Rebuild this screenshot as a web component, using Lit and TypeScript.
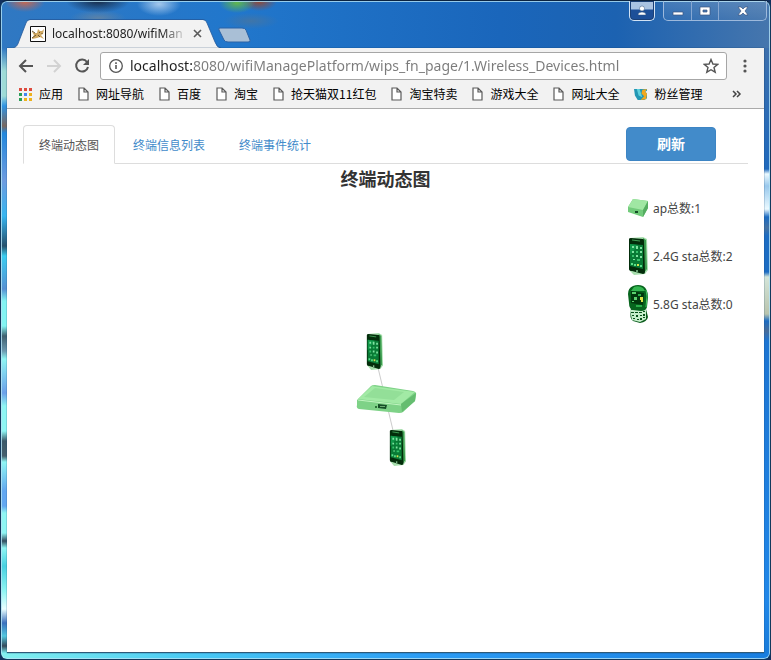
import { LitElement, html, svg, css } from "lit";
import { customElement, state } from "lit/decorators.js";
import { classMap } from "lit/directives/class-map.js";

const phoneArt = svg`
  <path d="M2 1 L15 0 L19 2 L20 33 L17 37 L6 38 L2 34 Z" fill="#a8dfae"/>
  <path d="M15 1 L18 3 L19 32 L16 36 Z" fill="#3d9e51"/>
  <path d="M1 2 Q1 1 3 1 L15 2 Q16 2 16 4 L17 35 Q17 37 15 37 L4 34 Q1 34 1 32 Z" fill="#032d0b"/>
  <path d="M2 7 L15 8 L15 32 L2 29 Z" fill="#087a35"/>
  <path d="M2 7 L10 8 L2 18 Z" fill="#11984a"/>
  <path d="M4 3 L12 4" stroke="#3f9f55" stroke-width="1"/>
  <path d="M4 9h2v2h-2z M8 9h2v3h-2z M12 10h2v2h-2z M4 14h2v2h-2z M12 14h2v2h-2z M8 18h2v2h-2z M12 19h2v2h-2z M5 22h2v1h-2z" fill="#7fe3a0"/>
  <path d="M8 14h2v2h-2z M4 18h2v2h-2z M9 22h3v2h-3z" fill="#34c26a"/>
  <path d="M3 26h2v2h-2z M6 27h2v2h-2z M12 28h2v2h-2z" fill="#5be08a"/>
  <path d="M9 27h2v2h-2z" fill="#d3e54c"/>
  <circle cx="9" cy="34" r="1" fill="#8fc99a"/>`;

const sliderArt = svg`
  <path d="M3 23 L17 20 L20 32 Q19 37 12 38 L5 36 Q1 34 3 23 Z" fill="#0b5c1d"/>
  <path d="M2 25 L4 35 L12 37 L18 34 L18 24 Z" fill="#c6efcb"/>
  <path d="M3 27h3v1h-3z M7 27h3v1h-3z M11 27h3v1h-3z M15 26h2v1h-2z M4 30h2v1h-2z M8 30h2v2h-2z M12 30h2v1h-2z M15 29h2v2h-2z M5 33h2v1h-2z M9 34h2v1h-2z M12 33h2v2h-2z M15 32h2v1h-2z" fill="#08501a"/>
  <path d="M5 1 Q10 -1 15 1 Q20 4 20 12 L19 22 Q18 26 13 26 L5 25 Q1 24 1 18 L0 9 Q0 3 5 1 Z" fill="#07651e"/>
  <path d="M6 2 Q11 0 15 3 L17 6 L3 6 Z" fill="#35b651"/>
  <path d="M3 6 L16 8 L15 20 L3 18 Z" fill="#02380d"/>
  <path d="M4 7h4v2h-4z M6 12h3v3h-3z M4 16h2v1h-2z" fill="#5ad06c"/>
  <path d="M12 12h3v5h-2v-2h-1z" fill="#d9e447"/>
  <path d="M10 9h3v2h-3z M8 20h6v2h-6z" fill="#2bb04b"/>
  <path d="M18 5 L19 11 L18 22" stroke="#48c964" fill="none"/>`;

const apArt = svg`
  <path d="M1 15 L15 1 Q16 0 19 0 L57 6 Q61 7 60 10 L59 16 L47 27 Q46 28 43 28 L3 24 Q0 23 1 20 Z" fill="#7ed287"/>
  <path d="M2 14 L16 1 L59 7 L45 19 Z" fill="#a2eaa5"/>
  <path d="M8 12 L19 3 L48 7 L38 15 Z" fill="#93df98"/>
  <path d="M45 19 L60 8 L59 16 L46 27 Z" fill="#65bd70"/>
  <path d="M2 15 L45 20" stroke="#c2f6c1" stroke-width="1"/>
  <path d="M22 19 L31 20 L30 24 L22 23 Z" fill="#164e27"/>
  <path d="M24 21h5v1h-5z" fill="#6bad72"/>
  <path d="M19 21h2v2h-2z" fill="#2d7338"/>`;

const pageIcon = html`<svg class="page" viewBox="0 0 11 14" aria-hidden="true">
  <path d="M1 1 H6 L10 5 V13 H1 Z M6 1 V5 H10" fill="#fff" stroke="#5a5a5a" stroke-width="1.2"/></svg>`;

const appsIcon = html`<svg class="apps" viewBox="0 0 13 13" aria-hidden="true">
  <path d="M0 0h3v3H0z M5 0h3v3H5z M10 0h3v3h-3z" fill="#dd4b3e"/>
  <path d="M0 5h3v3H0z" fill="#2a9d58"/><path d="M5 5h3v3H5z" fill="#4285f4"/>
  <path d="M10 5h3v3h-3z M5 10h3v3H5z M10 10h3v3h-3z" fill="#edb21d"/>
  <path d="M0 10h3v3H0z" fill="#2a9d58"/></svg>`;

const fansIcon = html`<svg class="fans" viewBox="0 0 14 12" aria-hidden="true">
  <path d="M0 0 L14 0 L14 2 L12 3 L14 5 L14 10 L11 12 L4 12 L1 7 Z" fill="#2397b4"/>
  <path d="M3 0 L6 0 L9 9 L5 7 Z" fill="#5fd0dc"/>
  <path d="M9 1 L14 0 L12 3 L14 5 L13 11 L7 12 L11 8 L8 5 Z" fill="#f3a81c"/></svg>`;

const bookmarks = ["网址导航", "百度", "淘宝", "抢天猫双11红包", "淘宝特卖", "游戏大全", "网址大全"];
const tabs = ["终端动态图", "终端信息列表", "终端事件统计"];

@customElement("window-bar")
class WindowBar extends LitElement {
  static styles = css`
    :host { display: flex; align-items: flex-end; height: 48px; font-family: "Noto Sans", "Noto Sans CJK SC", sans-serif; }
    button { margin: 0; padding: 0; border: 0; background: none; display: flex; align-items: center; justify-content: center; }
    .tab { display: grid; width: 208px; height: 29px; margin-left: 6px; }
    .tab > * { grid-area: 1 / 1; }
    .shape { width: 208px; height: 29px; }
    .face { display: flex; align-items: center; padding: 0 19px 0 17px; }
    .fav { width: 16px; height: 16px; flex: none; }
    .title { flex: 1; margin-left: 6px; overflow: hidden; white-space: nowrap; font-size: 12px; line-height: 16px; color: #222;
      -webkit-mask-image: linear-gradient(to right, #000 110px, transparent 136px); mask-image: linear-gradient(to right, #000 110px, transparent 136px); }
    .x { width: 9px; height: 9px; margin-left: 8px; }
    .x svg { width: 9px; height: 9px; }
    .new { width: 34px; height: 16px; margin: 0 0 5px -3px; }
    .new svg { width: 34px; height: 16px; }
    .controls { align-self: flex-start; display: flex; gap: 8px; margin: 1px -3px 0 auto; }
    .group { display: flex; box-sizing: border-box; height: 20px; border: 1px solid #9db9dc; border-top: 0; border-radius: 0 0 5px 5px; background: linear-gradient(#ffffff22, #ffffff08); }
    .group button { width: 27px; }
    .group button + button { border-left: 1px solid #86a7d2; }
    .group .close { width: 48px; }
    .user { border-color: #d2e3f5; background: linear-gradient(#a9c3e2 0 8px, #1d4f98 9px 18px); box-shadow: inset 0 0 0 1px #1b4076; }
    .user button { width: 24px; }
    .controls svg { width: 14px; height: 12px; }
  `;
  render() {
    return html`
      <div class="tab">
        <svg class="shape" viewBox="0 0 208 29" aria-hidden="true">
          <path d="M0 29 C4 28 5 25 6 22 L13 4 Q14 1 17 1 H190 Q193 1 194 4 L202 23 Q204 29 208 29 Z" fill="#f2f2f2"/>
          <path d="M0 29 C4 28 5 25 6 22 L13 4 Q14 0.500 17 0.500 H190 Q193 0.500 194 4 L202 23 Q204 29 208 29" fill="none" stroke="#24599b" stroke-width="0.800"/>
        </svg>
        <div class="face">
          <svg class="fav" viewBox="0 0 16 16" aria-hidden="true">
            <path d="M0.500 0.500h15v15h-15z" fill="#fff" stroke="#111"/>
            <path d="M7 7 L8 3 L10 5 L12 5 L14 3 L13 8 L11 9 L14 13 L10 11 L7 12 L2 13 L4 9 L2 6 L5 7 Z" fill="#d0a963"/>
            <path d="M2 12 L6 9 M9 6 L10 7 M12 7 L12 8 M8 9 L10 11 M2 5 L5 7" stroke="#6b5530" fill="none"/></svg>
          <span class="title">localhost:8080/wifiMan</span>
          <button class="x" aria-label="Close tab"><svg viewBox="0 0 9 9"><path d="M1 1 L8 8 M8 1 L1 8" stroke="#5a5a5a" stroke-width="1.600"/></svg></button>
        </div>
      </div>
      <button class="new" aria-label="New tab"><svg viewBox="0 0 34 16">
        <path d="M2 1 H24 Q27 1 28 3 L32 13 Q33 15 30 15 H10 Q7 15 6 13 L1 3 Q0 1 2 1 Z" fill="#a9bfd6" stroke="#2b62a5"/></svg></button>
      <div class="controls">
        <div class="group user"><button aria-label="User"><svg viewBox="0 0 14 12"><path d="M7 1 a2.500 2.500 0 0 1 0 5 a2.500 2.500 0 0 1 0 -5 M3 10 Q3 7 7 7 Q11 7 11 10 Z" fill="#fff" stroke="#31537d" stroke-width="0.500"/></svg></button></div>
        <div class="group">
          <button aria-label="Minimize"><svg viewBox="0 0 14 12"><path d="M2 7h10v3H2z" fill="#fff" stroke="#3b557e" stroke-width="0.700"/></svg></button>
          <button aria-label="Maximize"><svg viewBox="0 0 14 12"><path d="M2 2h10v8H2z M5 5v2h4V5z" fill="#fff" fill-rule="evenodd" stroke="#3b557e" stroke-width="0.700"/></svg></button>
          <button class="close" aria-label="Close"><svg viewBox="0 0 14 12"><path d="M2 2h3l2 2 2-2h3L9 6l3 4H9L7 8l-2 2H2l3-4z" fill="#fff" stroke="#3b557e" stroke-width="0.700"/></svg></button>
        </div>
      </div>`;
  }
}

@customElement("browser-toolbar")
class BrowserToolbar extends LitElement {
  static styles = css`
    :host { display: block; background: #f2f2f2; border-bottom: 1px solid #aaa; box-shadow: 0 1px 2px #0002; font-family: "Noto Sans", "Noto Sans CJK SC", sans-serif; }
    button { margin: 0; padding: 0; border: 0; background: none; display: flex; }
    .nav { display: flex; align-items: center; height: 36px; padding: 0 11px; }
    .tools { display: flex; gap: 12px; }
    .tools svg { width: 16px; height: 16px; }
    .omni { flex: 1; display: flex; align-items: center; gap: 6px; box-sizing: border-box; height: 28px; margin: 0 10px; padding: 0 7px; border: 1px solid #a6a6a6; border-radius: 3px; background: #fff; }
    .omni svg { width: 16px; height: 16px; flex: none; }
    input { flex: 1; min-width: 0; border: 0; padding: 0 0 2px; outline: 0; height: 22px; box-sizing: border-box; font-family: "Noto Sans", sans-serif; font-size: 14px;
      background: linear-gradient(to right, #1e1e1e 62px, #7b7b7b 62px); -webkit-background-clip: text; background-clip: text; -webkit-text-fill-color: transparent; }
    .menu svg { width: 16px; height: 16px; }
    .marks { display: flex; align-items: center; gap: 15px; height: 20px; padding: 0 22px 4px 12px; white-space: nowrap; }
    .marks a { display: flex; align-items: center; gap: 7px; font-size: 12px; line-height: 20px; color: #000; text-decoration: none; font-family: "Noto Sans CJK SC", sans-serif; }
    .page { width: 11px; height: 14px; }
    .apps, .fans { width: 13px; height: 13px; }
    .more { margin-left: auto; }
    .more svg { width: 10px; height: 8px; }
  `;
  render() {
    return html`
      <div class="nav">
        <div class="tools">
          <button aria-label="Back"><svg viewBox="0 0 16 16"><path d="M15 8 H3 M8 2 L2 8 L8 14" fill="none" stroke="#555" stroke-width="2"/></svg></button>
          <button aria-label="Forward"><svg viewBox="0 0 16 16"><path d="M1 8 H13 M8 2 L14 8 L8 14" fill="none" stroke="#d2d2d2" stroke-width="2"/></svg></button>
          <button aria-label="Reload"><svg viewBox="0 0 16 16"><path d="M13 4 A6 6 0 1 0 14 9" fill="none" stroke="#555" stroke-width="2"/><path d="M15 1 V7 H9 Z" fill="#555"/></svg></button>
        </div>
        <div class="omni">
          <svg viewBox="0 0 16 16" aria-hidden="true"><circle cx="8" cy="8" r="6.300" fill="none" stroke="#555" stroke-width="1.300"/><path d="M8 7v4" stroke="#555" stroke-width="1.600"/><path d="M7.200 4.300h1.600v1.600H7.200z" fill="#555"/></svg>
          <input aria-label="Address" value="localhost:8080/wifiManagePlatform/wips_fn_page/1.Wireless_Devices.html">
          <button aria-label="Bookmark"><svg viewBox="0 0 16 16"><path d="M8 1.500 L9.900 6 L14.700 6.400 L11 9.500 L12.200 14.200 L8 11.700 L3.800 14.200 L5 9.500 L1.300 6.400 L6.100 6 Z" fill="none" stroke="#555" stroke-width="1.400"/></svg></button>
        </div>
        <button class="menu" aria-label="Menu"><svg viewBox="0 0 16 16" fill="#555"><circle cx="8" cy="3" r="1.600"/><circle cx="8" cy="8" r="1.600"/><circle cx="8" cy="13" r="1.600"/></svg></button>
      </div>
      <nav class="marks">
        <a href="#">${appsIcon}应用</a>
        ${bookmarks.map((b) => html`<a href="#">${pageIcon}${b}</a>`)}
        <a href="#">${fansIcon}粉丝管理</a>
        <button class="more" aria-label="More bookmarks"><svg viewBox="0 0 10 8"><path d="M1 1 L4 4 L1 7 M5 1 L8 4 L5 7" fill="none" stroke="#444" stroke-width="1.500"/></svg></button>
      </nav>`;
  }
}

@customElement("device-page")
class DevicePage extends LitElement {
  @state() private active = 0;

  static styles = css`
    :host { flex: 1; display: flex; flex-direction: column; padding: 16px 16px 47px; background: #fff; font-family: "Noto Sans", "Noto Sans CJK SC", sans-serif; font-size: 12px; color: #333; }
    .bar { display: flex; align-items: flex-start; border-bottom: 1px solid #ddd; height: 38px; }
    .tabs { flex: 1; display: flex; gap: 2px; }
    .tabs button { box-sizing: border-box; height: 39px; padding: 0 15px; border: 1px solid transparent; border-radius: 4px 4px 0 0; background: none; font: inherit; color: #428bca; white-space: nowrap; }
    .tabs .on { color: #555; border-color: #ddd #ddd #fff; background: #fff; }
    .side { width: 122px; flex: none; }
    .refresh { width: 90px; height: 34px; margin-top: 2px; padding: 0 0 2px; border: 1px solid #3d85c4; border-radius: 4px; background: #428bca; color: #fff; font: bold 14px "Noto Sans CJK SC", sans-serif; }
    .stage { flex: 1; display: grid; grid-template-columns: 122px 1fr 122px; }
    .view { grid-column: 2; display: flex; flex-direction: column; align-items: center; }
    h1 { margin: 0; font-size: 18px; line-height: 30px; font-weight: bold; }
    .canvas { flex: 1; display: flex; align-items: center; }
    .canvas > svg { width: 120px; height: 140px; }
    .legend { list-style: none; margin: 20px 0 0; padding: 0 0 0 2px; white-space: nowrap; color: #444; }
    .legend li { display: flex; align-items: center; gap: 5px; height: 48px; }
    .legend svg { width: 20px; height: 38px; flex: none; }
  `;
  render() {
    return html`
      <div class="bar">
        <div class="tabs" role="tablist">
          ${tabs.map((t, i) => html`<button role="tab" aria-selected=${i === this.active} class=${classMap({ on: i === this.active })} @click=${() => (this.active = i)}>${t}</button>`)}
        </div>
        <div class="side"><button class="refresh">刷新</button></div>
      </div>
      <div class="stage">
        <div class="view">
          <h1>${tabs[this.active]}</h1>
          <div class="canvas">
            <svg viewBox="0 0 120 140" role="img" aria-label="终端动态图">
              <path d="M48 21 L71 117" stroke="#ccc"/>
              <svg x="40" y="3" width="17" height="37" viewBox="0 0 20 38" preserveAspectRatio="none">${phoneArt}</svg>
              <svg x="63" y="99" width="17" height="37" viewBox="0 0 20 38" preserveAspectRatio="none">${phoneArt}</svg>
              <svg x="30" y="55" width="61" height="29" viewBox="0 0 61 29">${apArt}</svg>
            </svg>
          </div>
        </div>
        <ul class="legend">
          <li><svg viewBox="0 0 20 38" aria-hidden="true">
            <path d="M0 18 L5 10 L20 12 L20 19 L15 28 L0 23 Z" fill="#72cb7b"/><path d="M0 18 L5 10 L20 12 L15 21 Z" fill="#a0e7a3"/>
            <path d="M15 21 L20 12 L20 19 L15 28 Z" fill="#55ad61"/><path d="M7 22h3v2h-3z" fill="#164e27"/></svg>ap总数:1</li>
          <li><svg viewBox="0 0 20 38" aria-hidden="true">${phoneArt}</svg>2.4G sta总数:2</li>
          <li><svg viewBox="0 0 20 38" aria-hidden="true">${sliderArt}</svg>5.8G sta总数:0</li>
        </ul>
      </div>`;
  }
}

@customElement("app-root")
class AppRoot extends LitElement {
  static styles = css`
    :host { display: block; background: #12305e; }
    .window { display: flex; flex-direction: column; box-sizing: border-box; min-height: 100vh; padding: 0 6px 6px; border: 1px solid #12395c; border-top-color: #0b2340; border-radius: 7px;
      box-shadow: inset 0 0 0 1px #b4e3f6cc;
      background:
        radial-gradient(ellipse 20px 10px at 24px 1px, #c56852, transparent) no-repeat,
        radial-gradient(ellipse 32px 12px at 97px 0, #182b47, transparent) no-repeat,
        radial-gradient(ellipse 22px 12px at 158px 3px, #a4c8ec, transparent) no-repeat,
        radial-gradient(ellipse 18px 10px at 236px 2px, #61b64b, transparent) no-repeat,
        radial-gradient(ellipse 18px 9px at 258px 1px, #8d4a3a, transparent) no-repeat,
        radial-gradient(ellipse 28px 8px at 97px 17px, #5b82a8, transparent) no-repeat,
        radial-gradient(ellipse 28px 8px at 250px 20px, #3f75a9, transparent) no-repeat,
        linear-gradient(to right, #3078c2, #2177cc 30%, #1a66bb 65%, #1c62b1 80%, #4676ad) top / 100% 47px no-repeat,
        linear-gradient(to right, #83f1ef, #48c9f4 25%, #2b9cf5 55%, #187ee0) bottom / 100% 6px no-repeat,
        linear-gradient(#3078c2 47px, #9edbd7 70px, #9edbd7 95px, #2f93e3 105px, #79675f 125px, #2187dc 132px, #6e9bdf 180px, #36b5f0 215px, #26506c 245px, #3bcdf0 255px, #5790d2 288px, #83f4f2 300px, #83f4f2 325px, #40606f 335px, #6d9ab0 350px, #8ff6f3 358px, #6ca0e9 392px, #8ff6f3 405px, #8ff6f3 430px, #3c5969 440px, #465f6d 455px, #8ff6f3 461px, #63a7f0 490px, #63a7f0 505px, #8ff6f3 512px, #8ff6f3 532px, #334e5f 540px, #8ff6f3 547px, #49d1e0 565px, #8ff6f3 590px, #eaffff 608px, #3b70bd 622px, #53c8df 635px, #35495a 645px, #7becef 652px) left / 6px 100% no-repeat,
        linear-gradient(#3d70ad 47px, #1f69bc 168px, #ecfaff 173px, #99c8ec 185px, #ecfaff 208px, #1c6cc2 216px, #4472a3 227px, #1c6cc2 235px, #1c6cc2 271px, #d4e5d9 276px, #b9c4ad 313px, #1c6cc2 320px, #476c99 330px, #1c74d1 340px, #2087e8 600px, #187ad8) right / 6px 100% no-repeat; }
    .client { flex: 1; display: flex; flex-direction: column; border-bottom: 1px solid #2d5a79; box-shadow: 0 0 1px #173f6b; }
    window-bar { margin-top: -1px; }
  `;
  render() {
    return html`<div class="window">
      <window-bar></window-bar>
      <div class="client"><browser-toolbar></browser-toolbar><device-page></device-page></div>
    </div>`;
  }
}
